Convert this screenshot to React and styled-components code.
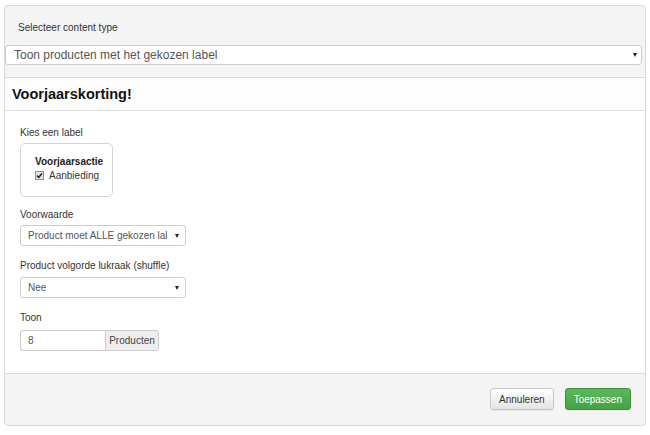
import React from 'react'
import styled, { createGlobalStyle } from 'styled-components'

const GlobalStyle = createGlobalStyle`
  body {
    margin: 0;
    background: #fff;
    font-family: 'Liberation Sans', Arial, sans-serif;
    color: #333;
  }
  * { box-sizing: border-box; }
`

const Page = styled.div`
  padding: 5px 4px 0 4px;
  width: 650px;
`

const Panel = styled.div`
  display: flex;
  flex-direction: column;
  width: 642px;
  height: 421px;
  border: 1px solid #d8d8d8;
  border-radius: 4px;
  background: #f4f4f4;
  overflow: hidden;
`

const Top = styled.div`
  padding: 15px 3px 12px 0;
`

const TopLabel = styled.div`
  padding-left: 13px;
  font-size: 10px;
  line-height: 14px;
  margin-bottom: 10px;
`

const Select = styled.div`
  display: flex;
  align-items: center;
  width: ${p => (p.wide ? '100%' : '166px')};
  height: ${p => (p.wide ? '20px' : '21px')};
  padding: ${p => (p.wide ? '0 4px 0 8px' : '0 6px 0 7px')};
  background: #fff;
  border: 1px solid #ccc;
  border-radius: 3px;
  font-size: ${p => (p.wide ? '12px' : '10px')};
  color: #555;
  white-space: nowrap;
`

const SelectText = styled.span`
  flex: 1;
  overflow: hidden;
  ${p => p.clip && `max-width: ${p.clip}px;`}
`

const Caret = styled.span`
  width: 0;
  height: 0;
  margin-left: auto;
  border-left: 2.5px solid transparent;
  border-right: 2.5px solid transparent;
  border-top: 4px solid #222;
`

const Heading = styled.h2`
  margin: 0;
  padding-left: 7px;
  height: 34px;
  line-height: 32px;
  border-top: 1px solid #dcdcdc;
  border-bottom: 1px solid #dcdcdc;
  background: #fdfdfd;
  font-size: 14.5px;
  font-weight: bold;
  color: #111;
`

const Body = styled.div`
  flex: 0 0 263px;
  display: flex;
  flex-direction: column;
  align-items: flex-start;
  padding: 15px 15px 0;
  background: #fff;
  border-bottom: 1px solid #dcdcdc;
`

const Group = styled.div`
  margin-bottom: ${p => p.gap || 0}px;
`

const Label = styled.div`
  font-size: 10px;
  line-height: 14px;
  margin-bottom: ${p => p.gap || 3}px;
  color: #333;
`

const LabelBox = styled.div`
  width: 93px;
  height: 54px;
  padding: 12px 0 0 14px;
  border: 1px solid #d4d4d4;
  border-radius: 5px;
`

const BoxTitle = styled.div`
  font-size: 10px;
  font-weight: bold;
  line-height: 12px;
  color: #222;
`

const CheckRow = styled.div`
  display: flex;
  align-items: center;
  gap: 5px;
  margin-top: 1px;
  font-size: 10px;
  line-height: 13px;
  color: #333;
`

const Check = () => (
  <svg width="9" height="9" viewBox="0 0 9 9">
    <rect x="0.5" y="0.5" width="8" height="8" fill="#e6e6e6" stroke="#8e8e8e" />
    <path d="M2 4.6 L3.7 6.3 L7 2.4" fill="none" stroke="#222" strokeWidth="1.5" />
  </svg>
)

const InputGroup = styled.div`
  display: flex;
  height: 21px;
  font-size: 10px;
`

const Input = styled.div`
  width: 85px;
  padding-left: 7px;
  line-height: 19px;
  border: 1px solid #ccc;
  border-right: none;
  border-radius: 3px 0 0 3px;
  color: #555;
`

const Addon = styled.div`
  width: 54px;
  text-align: center;
  line-height: 19px;
  background: #eee;
  border: 1px solid #ccc;
  border-radius: 0 3px 3px 0;
  color: #444;
`

const Footer = styled.div`
  flex: 1;
  display: flex;
  justify-content: flex-end;
  align-items: flex-start;
  gap: 11px;
  padding: 14px 14px 0 0;
`

const Button = styled.button`
  height: 22px;
  padding: 0 8px;
  font-family: inherit;
  font-size: 10px;
  border-radius: 3px;
  border: 1px solid ${p => (p.primary ? '#3e8f3e' : '#c8c8c8')};
  color: ${p => (p.primary ? '#fff' : '#333')};
  background: ${p =>
    p.primary
      ? 'linear-gradient(#5cb85c, #43a343)'
      : 'linear-gradient(#ffffff, #e4e4e4)'};
  box-shadow: 0 1px 1px rgba(0, 0, 0, 0.06);
`

export default function App() {
  return (
    <Page>
      <GlobalStyle />
      <Panel>
        <Top>
          <TopLabel>Selecteer content type</TopLabel>
          <Select wide>
            <SelectText>Toon producten met het gekozen label</SelectText>
            <Caret />
          </Select>
        </Top>
        <Heading>Voorjaarskorting!</Heading>
        <Body>
          <Group gap={11}>
            <Label>Kies een label</Label>
            <LabelBox>
              <BoxTitle>Voorjaarsactie</BoxTitle>
              <CheckRow>
                <Check />
                Aanbieding
              </CheckRow>
            </LabelBox>
          </Group>
          <Group gap={13}>
            <Label>Voorwaarde</Label>
            <Select>
              <SelectText clip={139}>Product moet ALLE gekozen labels bevatten</SelectText>
              <Caret />
            </Select>
          </Group>
          <Group gap={13}>
            <Label gap={4}>Product volgorde lukraak (shuffle)</Label>
            <Select>
              <SelectText>Nee</SelectText>
              <Caret />
            </Select>
          </Group>
          <Group>
            <Label gap={5}>Toon</Label>
            <InputGroup>
              <Input>8</Input>
              <Addon>Producten</Addon>
            </InputGroup>
          </Group>
        </Body>
        <Footer>
          <Button>Annuleren</Button>
          <Button primary>Toepassen</Button>
        </Footer>
      </Panel>
    </Page>
  )
}
